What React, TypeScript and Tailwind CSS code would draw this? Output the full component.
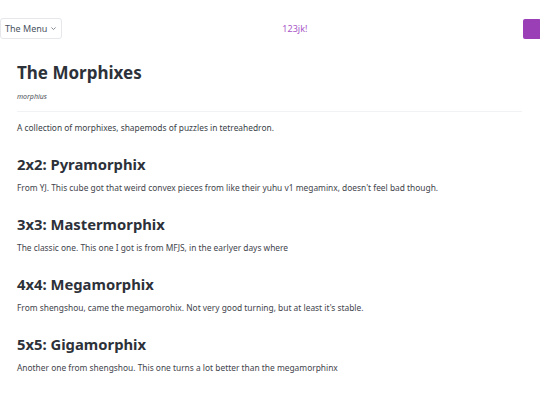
import React from 'react';

const sections = [
  {
    title: '2x2: Pyramorphix',
    body: "From YJ. This cube got that weird convex pieces from like their yuhu v1 megaminx, doesn't feel bad though.",
  },
  {
    title: '3x3: Mastermorphix',
    body: 'The classic one. This one I got is from MFJS, in the earlyer days where',
  },
  {
    title: '4x4: Megamorphix',
    body: "From shengshou, came the megamorohix. Not very good turning, but at least it's stable.",
  },
  {
    title: '5x5: Gigamorphix',
    body: 'Another one from shengshou. This one turns a lot better than the megamorphinx',
  },
];

export default function App() {
  return (
    <div className="w-[540px] h-[405px] overflow-hidden bg-white font-['Noto_Sans',sans-serif] text-[#363b43]">
      <header className="flex items-center h-[56px] pt-[1px]">
        <button className="flex items-center gap-[3px] h-[21px] px-[4px] border border-[#e5e7eb] rounded-[3px] text-[9px] text-[#4b5563] bg-white">
          The Menu
          <svg width="7" height="7" viewBox="0 0 10 10" className="text-[#6b7280]">
            <path d="M2 3.5 L5 6.5 L8 3.5" fill="none" stroke="currentColor" strokeWidth="1.2" />
          </svg>
        </button>
        <span className="text-[9px] text-[#a855c7] ml-[220px]">123jk!</span>
        <div className="ml-auto w-[18px] h-[20px] rounded-[2px] bg-[#9a3fb6] mr-[-1px]" />
      </header>

      <main className="px-[17px]">
        <h1 className="text-[17px] font-bold leading-[24px] text-[#2d3139] mt-[5px]">The Morphixes</h1>
        <p className="text-[7px] italic text-[#4b4f56] mt-[7px]">morphius</p>
        <hr className="border-[#f1f2f4] mt-[8px] w-[505px]" />
        <p className="text-[8.4px] mt-[10px] text-[#3a3f47]">
          A collection of morphixes, shapemods of puzzles in tetreahedron.
        </p>

        {sections.map((s) => (
          <section key={s.title} className="mt-[18.5px]">
            <h2 className="text-[14.8px] font-bold leading-[22px] text-[#2d3139]">{s.title}</h2>
            <p className="text-[8.4px] mt-[7px] text-[#3f444c]">{s.body}</p>
          </section>
        ))}
      </main>
    </div>
  );
}
